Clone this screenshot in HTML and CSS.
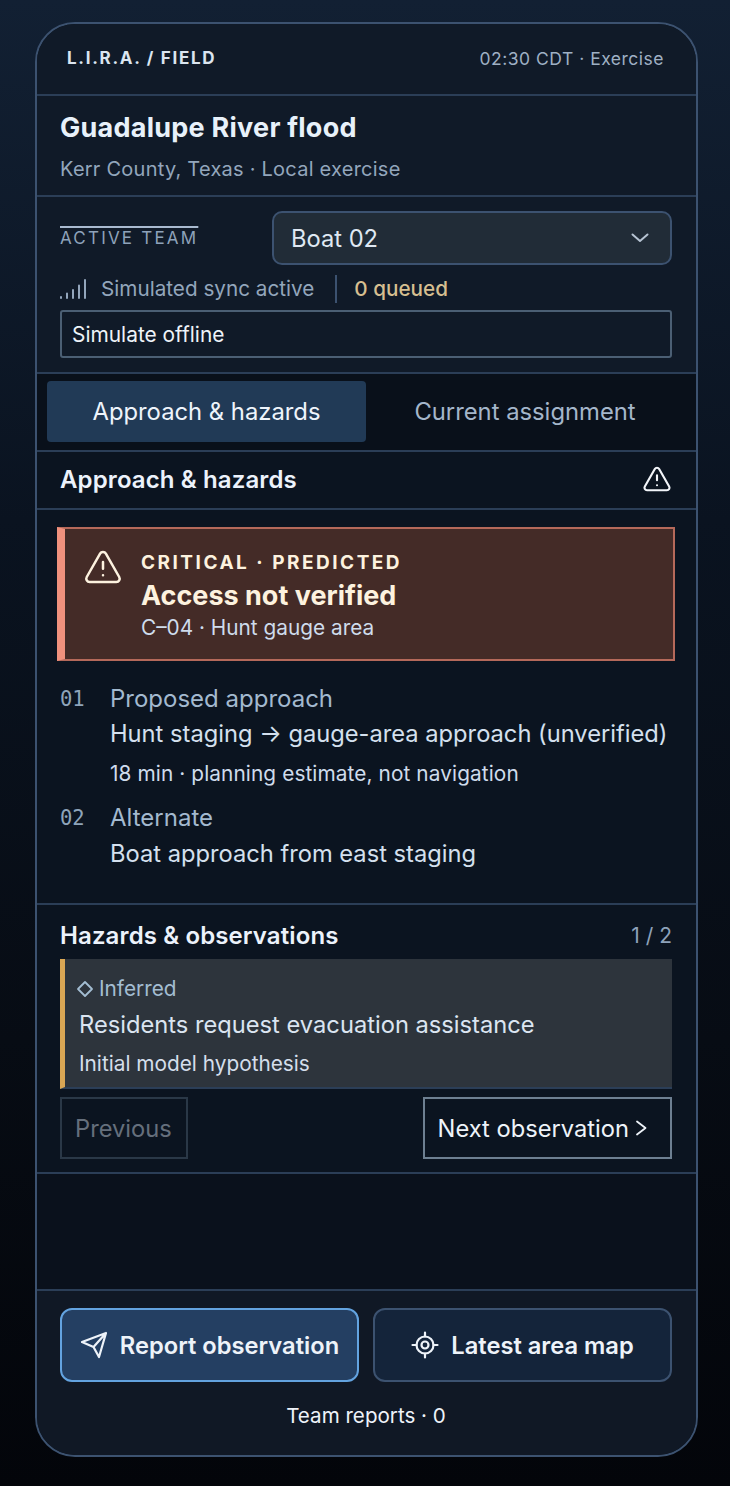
FILE: index.html
```html
<!DOCTYPE html>
<html lang="en">
<head>
<meta charset="utf-8">
<title>L.I.R.A. / Field</title>
<link rel="stylesheet" href="styles.css">
</head>
<body>
<main class="card">
  <header class="topbar">
    <span class="brand">L.I.R.A. / FIELD</span>
    <span class="clock">02:30 CDT · Exercise</span>
  </header>
  <section class="incident">
    <h1 class="incident-title">Guadalupe River flood</h1>
    <p class="incident-sub">Kerr County, Texas · Local exercise</p>
  </section>
  <section class="team">
    <div class="team-row">
      <span class="team-label">ACTIVE TEAM</span>
      <div class="select">
        <span>Boat 02</span>
        <svg class="chevron" viewBox="0 0 18 18" width="18" height="18"><path d="M1.500 5.500 9 12l7.500-6.500"/></svg>
      </div>
    </div>
    <div class="sync-row">
      <svg class="signal" viewBox="0 0 26 20" width="26" height="20"><path d="M1 18v1M7 14.500v4.500M13 11v8M19 6.500V19M25 1v18"/></svg>
      <span class="sync-text">Simulated sync active</span>
      <span class="sync-rule"></span>
      <span class="queued">0 queued</span>
    </div>
    <button class="offline">Simulate offline</button>
  </section>
  <nav class="tabs">
    <span class="tab tab-active">Approach &amp; hazards</span>
    <span class="tab">Current assignment</span>
  </nav>
  <div class="section-head">
    <h2>Approach &amp; hazards</h2>
    <svg class="icon-white" viewBox="0 0 24 24" width="30" height="30"><path d="m21.730 18-8-14a2 2 0 0 0-3.480 0l-8 14A2 2 0 0 0 4 21h16a2 2 0 0 0 1.730-3"/><path d="M12 9v4M12 17h.01"/></svg>
  </div>
  <section class="approach">
    <div class="alert">
      <svg class="alert-icon" viewBox="0 0 24 24" width="40" height="40"><path d="m21.730 18-8-14a2 2 0 0 0-3.480 0l-8 14A2 2 0 0 0 4 21h16a2 2 0 0 0 1.730-3"/><path d="M12 9v4M12 17h.01"/></svg>
      <div>
        <div class="alert-kicker">CRITICAL · PREDICTED</div>
        <div class="alert-title">Access not verified</div>
        <div class="alert-sub">C–04 · Hunt gauge area</div>
      </div>
    </div>
    <ol class="routes">
      <li class="route">
        <span class="route-num">01</span>
        <div>
          <div class="route-label">Proposed approach</div>
          <div class="route-main">Hunt staging → gauge-area approach (unverified)</div>
          <div class="route-note">18 min · planning estimate, not navigation</div>
        </div>
      </li>
      <li class="route">
        <span class="route-num">02</span>
        <div>
          <div class="route-label">Alternate</div>
          <div class="route-main route-main-alt">Boat approach from east staging</div>
        </div>
      </li>
    </ol>
  </section>
  <section class="hazards">
    <div class="hazards-head">
      <h2>Hazards &amp; observations</h2>
      <span class="count">1 / 2</span>
    </div>
    <article class="obs">
      <div class="obs-tag">
        <svg class="diamond" viewBox="0 0 18 18" width="18" height="18"><path d="M9 2 16 9 9 16 2 9Z"/></svg>
        <span>Inferred</span>
      </div>
      <div class="obs-title">Residents request evacuation assistance</div>
      <div class="obs-note">Initial model hypothesis</div>
    </article>
    <div class="pager">
      <button class="pager-btn pager-prev">Previous</button>
      <button class="pager-btn pager-next">Next observation
        <svg class="next-chev" viewBox="0 0 12 18" width="12" height="18"><path d="M2 2.500 10.500 9 2 15.500"/></svg>
      </button>
    </div>
  </section>
  <div class="spacer"></div>
  <footer class="footer">
    <div class="actions">
      <button class="action action-primary">
        <svg class="icon-action" viewBox="0 0 28 28" width="28" height="28"><path d="M26 2 2 11l11.500 5L19 26ZM26 2 13.500 16"/></svg>
        Report observation
      </button>
      <button class="action">
        <svg class="icon-action" viewBox="0 0 28 28" width="28" height="28"><circle cx="14" cy="14" r="8.500"/><circle cx="14" cy="14" r="3.500"/><path d="M14 1.500v4M14 22.500v4M1.500 14h4M22.500 14h4"/></svg>
        Latest area map
      </button>
    </div>
    <div class="reports">Team reports · 0</div>
  </footer>
</main>
</body>
</html>
```

FILE: styles.css
```css
* { box-sizing: border-box; }
html, body { margin: 0; height: 100%; }
body {
  width: 730px;
  height: 1486px;
  padding: 22px 32px 29px 35px;
  background: linear-gradient(180deg, #122033 0%, #0a1320 35%, #070c14 70%, #03050a 100%);
  font-family: Inter, "Liberation Sans", sans-serif;
  color: #e8f0f8;
  overflow: hidden;
}
h1, h2, p, ol { margin: 0; padding: 0; }
button { font-family: inherit; background: none; cursor: pointer; }
svg { fill: none; stroke: currentColor; stroke-linecap: round; stroke-linejoin: round; flex: none; }

.card {
  width: 663px;
  height: 1435px;
  display: flex;
  flex-direction: column;
  border: 2px solid #3c5270;
  border-radius: 40px;
  overflow: hidden;
  background: #0b1420;
}

.topbar {
  height: 72px;
  flex: none;
  padding: 0 32px 2px 30px;
  display: flex;
  align-items: center;
  justify-content: space-between;
  border-bottom: 2px solid #2b3e57;
  background: #101a28;
}
.brand { font-size: 17px; font-weight: 700; letter-spacing: 1.700px; color: #dbe5f0; }
.clock { font-size: 17.500px; color: #9fb0c4; letter-spacing: .5px; }

.incident {
  height: 101px;
  flex: none;
  padding: 15px 24px 0 23px;
  border-bottom: 2px solid #2b3e57;
  background: #101a28;
}
.incident-title { font-size: 27px; line-height: 34px; font-weight: 700; letter-spacing: .25px; color: #e8f1fa; }
.incident-sub { margin-top: 11px; font-size: 20px; line-height: 26px; letter-spacing: .24px; color: #93a6bc; }

.team {
  height: 177px;
  flex: none;
  padding: 14px 24px 0 23px;
  border-bottom: 2px solid #2b3e57;
  background: #101a28;
}
.team-row { display: flex; align-items: center; }
.team-label {
  width: 212px;
  font-size: 17px;
  line-height: 20px;
  letter-spacing: 2.200px;
  color: #8ea2ba;
  text-decoration: overline;
  text-decoration-thickness: 2px;
  text-decoration-color: #a9bad0;
  white-space: nowrap;
}
.select {
  flex: 1;
  height: 54px;
  padding: 0 21px 0 17px;
  display: flex;
  align-items: center;
  justify-content: space-between;
  border: 2px solid #3c5270;
  border-radius: 10px;
  background: #212c37;
  font-size: 23.700px;
  color: #dfe8f2;
}
.chevron { stroke-width: 2; color: #b6c3d2; }
.sync-row { height: 45px; padding-top: 2px; display: flex; align-items: center; }
.signal { stroke-width: 2; color: #93a6bc; }
.sync-text { margin-left: 15px; font-size: 20.700px; color: #93a6bc; }
.sync-rule { width: 2px; height: 28px; margin: 0 17px 0 21px; background: #3c5270; }
.queued { font-size: 20.700px; font-weight: 500; color: #d6bf90; }
.offline {
  display: block;
  width: 100%;
  height: 48px;
  padding: 0 10px;
  text-align: left;
  border: 2px solid #4b5f74;
  border-radius: 3px;
  font-size: 20.900px;
  color: #eef3f9;
}

.tabs {
  height: 78px;
  flex: none;
  padding: 7px 12px 8px 10px;
  display: grid;
  grid-template-columns: 319px 1fr;
  border-bottom: 2px solid #2b3e57;
  background: #09101a;
}
.tab {
  display: flex;
  align-items: center;
  justify-content: center;
  font-size: 23.800px;
  color: #a4b6ca;
}
.tab-active {
  border-radius: 4px;
  background: #213a56;
  color: #eef4fb;
}

.section-head {
  height: 58px;
  flex: none;
  padding: 0 24px 2px 23px;
  display: flex;
  align-items: center;
  justify-content: space-between;
  border-bottom: 2px solid #2b3e57;
}
.section-head h2, .hazards-head h2 { font-size: 24px; font-weight: 600; letter-spacing: .12px; color: #ecf2fb; }
.icon-white { stroke-width: 1.700; color: #f2f5f9; }

.approach {
  height: 395px;
  flex: none;
  padding: 17px 21px 0 20px;
  border-bottom: 2px solid #2b3e57;
}
.alert {
  height: 134px;
  padding: 18px 0 0 18px;
  display: flex;
  gap: 18px;
  border: 2px solid #b5695a;
  border-left: 8px solid #f0917d;
  background: #442b27;
}
.alert-icon { stroke-width: 1.500; color: #fdf2df; }
.alert-kicker { padding-top: 4px; font-size: 19px; line-height: 24px; font-weight: 700; letter-spacing: 2.500px; color: #fdf2df; }
.alert-title { margin-top: 4px; font-size: 27px; line-height: 34px; font-weight: 700; color: #fdf2df; }
.alert-sub { margin-top: 1px; font-size: 20.800px; line-height: 28px; color: #cfdcec; }

.routes { list-style: none; padding: 21px 0 0 3px; }
.route { display: grid; grid-template-columns: 50px 1fr; margin-bottom: 5px; }
.route-num { font-family: "DejaVu Sans Mono", monospace; font-size: 20.500px; line-height: 34px; color: #8ea4ba; }
.route-label { font-size: 24px; line-height: 34px; color: #a3b9cf; }
.route-main { font-size: 23.700px; line-height: 36px; color: #d4e0ee; white-space: nowrap; }
.route-main-alt { margin-top: 1px; }
.route-note { font-size: 20.800px; line-height: 44px; letter-spacing: .1px; color: #cfdcec; }

.hazards { height: 269px; flex: none; padding: 14px 24px 0 23px; border-bottom: 2px solid #2b3e57; }
.hazards-head { height: 32px; display: flex; align-items: center; justify-content: space-between; }
.count { font-size: 21px; color: #8ea2ba; }
.obs {
  height: 130px;
  margin-top: 8px;
  padding: 17px 0 0 11px;
  border-left: 5px solid #d9a654;
  border-bottom: 2px solid #2b3e57;
  background: #2d343c;
}
.obs-tag { display: flex; align-items: center; gap: 5px; font-size: 20.800px; line-height: 26px; color: #a3bdd2; }
.diamond { stroke-width: 1.800; color: #a3bdd2; }
.obs-title { margin: 7px 0 0 3px; font-size: 23.700px; line-height: 32px; color: #dbe5f1; }
.obs-note { margin: 10px 0 0 3px; font-size: 20.800px; line-height: 26px; color: #d4deeb; }
.pager { margin-top: 8px; display: flex; justify-content: space-between; }
.pager-btn { height: 62px; font-size: 23.700px; padding: 0 14px; display: flex; align-items: center; gap: 6px; }
.pager-prev { width: 128px; padding: 0 13px; border: 2px solid #2a3847; color: #656f7c; }
.pager-next { padding: 0 23px 0 13px; border: 2px solid #6d7f91; color: #eef3f9; }
.next-chev { stroke-width: 1.800; }

.spacer { flex: 1; background: #0a111c; }

.footer { height: 166px; flex: none; padding: 17px 24px 0 23px; border-top: 2px solid #2b3e57; background: #101825; }
.actions { display: grid; grid-template-columns: 299px 299px; gap: 14px; }
.action {
  height: 74px;
  display: flex;
  align-items: center;
  justify-content: center;
  gap: 12px;
  padding-bottom: 1px;
  border: 2px solid #3c5270;
  border-radius: 12px;
  background: #14243a;
  font-size: 23.700px;
  font-weight: 600;
  color: #eef3f9;
}
.action-primary { background: #243f62; border-color: #63a3e0; }
.icon-action { stroke-width: 2.200; color: #eef3f9; }
.reports { margin-top: 20px; text-align: center; font-size: 20.600px; line-height: 28px; color: #eef3f9; }
```
